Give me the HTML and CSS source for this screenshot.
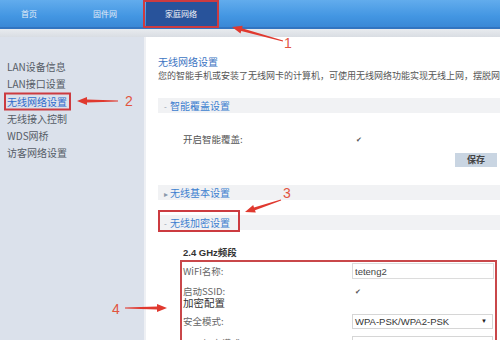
FILE: index.html
```html
<!DOCTYPE html>
<html lang="zh-CN">
<head>
    <meta charset="UTF-8">
    <meta name="viewport" content="width=device-width, initial-scale=1.0">
    <title>家庭网络 - 无线网络设置</title>
    <link rel="stylesheet" href="styles.css">
</head>
<body>
    <div class="page">
        <!-- Top navigation -->
        <header class="topbar">
            <nav class="nav">
                <a class="nav-item">首页</a>
                <a class="nav-item">固件网</a>
                <a class="nav-item active">家庭网络</a>
            </nav>
        </header>
        <div class="subbar"></div>

        <div class="main">
            <!-- Left menu -->
            <aside class="sidebar">
                <ul class="menu">
                    <li>LAN设备信息</li>
                    <li>LAN接口设置</li>
                    <li class="current">无线网络设置</li>
                    <li>无线接入控制</li>
                    <li>WDS网桥</li>
                    <li>访客网络设置</li>
                </ul>
            </aside>

            <!-- Settings content -->
            <section class="content">
                <h1 class="page-title">无线网络设置</h1>
                <p class="desc">您的智能手机或安装了无线网卡的计算机，可使用无线网络功能实现无线上网，摆脱网线的束缚。</p>

                <div class="panel-bar"><span class="marker">-</span>智能覆盖设置</div>
                <div class="field smart">
                    <span class="label">开启智能覆盖:</span>
                    <span class="check">&#10004;</span>
                </div>
                <div class="actions">
                    <button type="button" class="btn-save">保存</button>
                </div>

                <div class="panel-bar basic"><span class="marker">&#9656;</span>无线基本设置</div>
                <div class="panel-bar secure"><span class="marker">-</span>无线加密设置</div>

                <h3 class="band-title">2.4 GHz频段</h3>
                <div class="form-box">
                    <div class="field wifi-name">
                        <span class="label">WiFi名称:</span>
                        <input type="text" class="text-input" value="teteng2">
                    </div>
                    <div class="field ssid">
                        <span class="label">启动SSID:</span>
                        <span class="check">&#10004;</span>
                    </div>
                    <h4 class="group-title">加密配置</h4>
                    <div class="field mode">
                        <span class="label">安全模式:</span>
                        <div class="select">WPA-PSK/WPA2-PSK<span class="caret">&#9660;</span></div>
                    </div>
                    <div class="field next">
                        <span class="label">WPA加密模式:</span>
                        <div class="select"></div>
                    </div>
                </div>
            </section>
        </div>

        <!-- Tutorial annotations drawn over the page -->
        <svg class="annotations" width="500" height="340" viewBox="0 0 500 340">
            <g class="boxes">
                <rect x="144" y="1" width="74" height="26"/>
                <rect x="5" y="93.5" width="65" height="16"/>
                <rect x="159" y="211" width="80" height="20"/>
            </g>
            <g class="arrows">
                <polygon points="283.1,40.5 242,28.2 242.7,25.8 232,27 240.5,33.5 241.2,31.1 282.9,41.5"/>
                <polygon points="118,100.4 87,99.4 87,97 77,101 87,105 87,102.6 118,101.6"/>
                <polygon points="280.8,199.5 254,207.4 253.2,205 245,212 255.8,212.6 255,210.2 281.2,200.5"/>
                <polygon points="125,307.4 157,306.4 157,304 167,308 157,312 157,309.6 125,308.6"/>
            </g>
            <g class="numbers">
                <text x="284" y="48">1</text>
                <text x="125" y="106">2</text>
                <text x="283" y="198">3</text>
                <text x="112" y="314">4</text>
            </g>
        </svg>
    </div>
</body>
</html>
```

FILE: styles.css
```css
body {
    margin: 0;
    font-family: "Noto Sans CJK SC", "Liberation Sans", sans-serif;
    background-color: #ffffff;
    color: #555;
}
.page {
    position: relative;
    width: 500px;
    height: 340px;
    overflow: hidden;
}

/* Top navigation */
.topbar {
    height: 27px;
    background: linear-gradient(#62aced, #4396e2 60%, #3a88d6);
    border-bottom: 2px solid #3274c0;
}
.nav {
    display: flex;
    height: 100%;
    padding-left: 2px;
}
.nav-item {
    width: 72px;
    box-sizing: border-box;
    padding-left: 19px;
    font-size: 8px;
    line-height: 27px;
    color: #e2ecf7;
}
.nav-item.active {
    background-color: #28539b;
    color: #f2f5fa;
}
.subbar {
    height: 8px;
    background: linear-gradient(#e8ebef, #d9dde3);
}

/* Main area */
.main {
    display: flex;
    height: 303px;
}
.sidebar {
    width: 144px;
    flex-shrink: 0;
    background-color: #dbe1eb;
    border-right: 2px solid #eef0f4;
}
.menu {
    list-style: none;
    margin: 0;
    padding: 21px 0 0 7px;
}
.menu li {
    font-size: 10px;
    line-height: 17.3px;
    color: #555c66;
}
.menu li.current {
    color: #2f6ccd;
}

.content {
    flex: 1;
    min-width: 0;
    padding: 18px 3px 0 12px;
}
.page-title {
    margin: 0;
    font-size: 10px;
    font-weight: normal;
    line-height: 14px;
    color: #3c74c2;
}
.desc {
    margin: 0 -3px 0 0;
    font-size: 9px;
    line-height: 14px;
    color: #555;
    white-space: nowrap;
    overflow: hidden;
}
.panel-bar {
    margin: 15px -3px 0 0;
    padding-left: 6px;
    height: 15px;
    line-height: 15px;
    background-color: #f1f2f4;
    font-size: 10px;
    color: #3d7fd0;
}
.panel-bar .marker {
    display: inline-block;
    width: 6px;
    color: #8a99ab;
    font-size: 8px;
}
.panel-bar.basic {
    margin-top: 18px;
}

.field {
    display: grid;
    grid-template-columns: 169px 1fr;
    align-items: center;
}
.field .label {
    font-size: 9.5px;
    line-height: 11px;
    color: #666;
}
.check {
    padding-left: 3px;
    font-size: 7px;
    line-height: 11px;
    color: #555;
}
.smart {
    margin-top: 19px;
    padding-left: 25px;
    height: 14px;
    grid-template-columns: 170px 1fr;
}
.smart .label {
    color: #555;
}
.actions {
    display: flex;
    justify-content: flex-end;
    margin-top: 7px;
}
.btn-save {
    width: 42px;
    height: 14px;
    padding: 0;
    border: none;
    background-color: #c9d5e2;
    font-family: inherit;
    font-size: 9px;
    font-weight: bold;
    line-height: 14px;
    color: #444;
}

.band-title {
    margin: 16px 0 0 25px;
    font-size: 9.5px;
    line-height: 14px;
    color: #333;
    font-family: "Liberation Sans", "Noto Sans CJK SC", sans-serif;
}
.form-box {
    margin-left: 22px;
    height: 90px;
    border: 2px solid #c9474a;
    border-bottom: none;
    padding: 0 1px;
}
.wifi-name {
    height: 16px;
    margin-top: 1px;
}
.text-input {
    width: 142px;
    height: 16px;
    box-sizing: border-box;
    padding: 0 2px;
    border: 1px solid #dcdcdc;
    font-family: "Liberation Sans", sans-serif;
    font-size: 9.5px;
    color: #444;
}
.ssid {
    margin-top: 7px;
    height: 11px;
}
.group-title {
    margin: 0;
    font-size: 10.5px;
    font-weight: normal;
    line-height: 11px;
    color: #333;
}
.mode {
    margin-top: 6px;
}
.select {
    position: relative;
    width: 141px;
    height: 15px;
    box-sizing: border-box;
    padding-left: 2px;
    border: 1px solid #d6d6d6;
    font-family: "Liberation Sans", sans-serif;
    font-size: 9.5px;
    line-height: 13px;
    color: #333;
}
.caret {
    position: absolute;
    right: 5px;
    top: 0;
    font-size: 6px;
    color: #222;
}
.next {
    margin-top: 7px;
}

/* Annotation overlay */
.annotations {
    position: absolute;
    top: 0;
    left: 0;
    pointer-events: none;
}
.boxes rect {
    fill: none;
    stroke: #cc3b40;
    stroke-width: 2;
}
.arrows polygon {
    fill: #e0392f;
}
.numbers text {
    font-family: "Liberation Sans", sans-serif;
    font-size: 14px;
    fill: #e2543f;
}
```
